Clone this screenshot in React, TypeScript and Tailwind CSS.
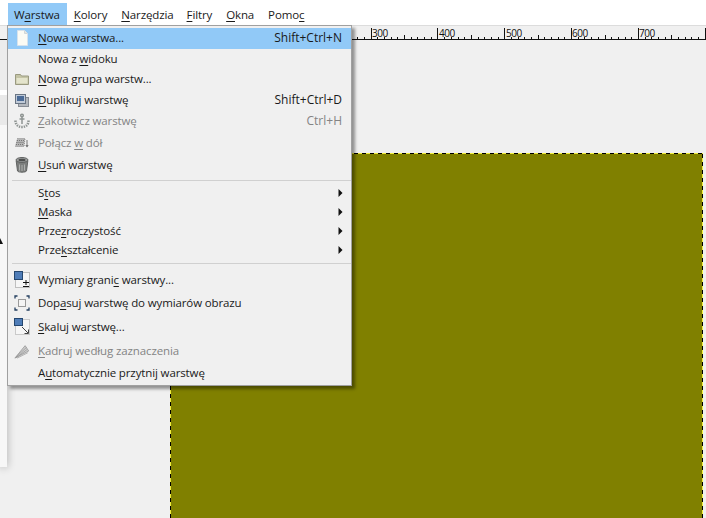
import React from "react";

type Row = { label: React.ReactNode; h: string; icon?: React.ReactNode; shortcut?: string; disabled?: boolean; active?: boolean; arrow?: boolean };

const U = ({ children }: { children: React.ReactNode }) => (
  <span className="underline decoration-1 underline-offset-2">{children}</span>
);

const PageIcon = () => (
  <svg width="16" height="18" viewBox="0 0 16 18">
    <path d="M3.500 1.500h7l3 3v12h-10z" fill="#fbfbf4" stroke="#d6e2ec" />
    <path d="M10.500 1.500v3h3" fill="#e6e6dc" stroke="#cfd6da" />
  </svg>
);
const FolderIcon = () => (
  <svg width="16" height="16" viewBox="0 0 16 16">
    <path d="M1.500 3.500h5l1 1.500h7v8.500h-13z" fill="#c4c4a6" stroke="#9a9a80" />
    <path d="M2.500 7h11v5.500h-11z" fill="#e4e4cc" />
  </svg>
);
const DuplicateIcon = () => (
  <svg width="16" height="16" viewBox="0 0 16 16">
    <rect x="4.500" y="5.500" width="10" height="9" fill="#b4b8be" stroke="#878c94" />
    <rect x="1.500" y="2.500" width="10" height="9" fill="#c0cad8" stroke="#6a7583" />
    <rect x="3" y="4" width="7" height="5" fill="#4a6a96" />
  </svg>
);
const AnchorIcon = () => (
  <svg width="16" height="16" viewBox="0 0 16 16" fill="none" stroke="#8e9492" strokeWidth="1.500">
    <circle cx="8" cy="2.500" r="1.300" />
    <path d="M8 4v7M5.500 6h5" />
    <path d="M1.500 7.500c0 4 2.500 6.500 6.500 6.500s6.500-2.500 6.500-6.500" strokeWidth="2.600" strokeDasharray="1.400 1" />
  </svg>
);
const MergeIcon = () => (
  <svg width="16" height="16" viewBox="0 0 16 16">
    <path d="M3.500 3.500h7.500l-1 8h-8.500z" fill="#b4b4b4" stroke="#8a8a8a" strokeDasharray="1 1" />
    <path d="M3 5.500h7M2.500 7.500h7M2 9.500h7.500" stroke="#777" strokeDasharray="1 1" />
    <path d="M13 5v7" stroke="#777" />
    <path d="M11.300 10l1.700 2.500 1.700-2.500z" fill="#777" />
  </svg>
);
const TrashIcon = () => (
  <svg width="14" height="16" viewBox="0 0 14 16">
    <ellipse cx="7" cy="3" rx="6" ry="2.500" fill="#9a9c9b" stroke="#616362" />
    <ellipse cx="7" cy="3" rx="3.500" ry="1.200" fill="#4d4f4e" />
    <path d="M1.200 4l1.300 10c1 1.600 8 1.600 9 0l1.300-10c-2 2-9.600 2-11.600 0z" fill="#7c7e7d" stroke="#616362" />
    <path d="M4.500 7.500v6M7 8v6M9.500 7.500v6" stroke="#aeb0af" />
  </svg>
);
const BoundaryIcon = () => (
  <svg width="16" height="18" viewBox="0 0 16 18">
    <rect x="1.500" y="1.500" width="14" height="15" fill="#f6f6f6" stroke="#8a8a8a" strokeDasharray="1 1" />
    <rect x="0.500" y="0.500" width="8" height="8" fill="#4f7db8" stroke="#25476f" />
    <path d="M9 11.500h6M12 9v5M9 15.500h6" stroke="#111" fill="none" />
  </svg>
);
const FitIcon = () => (
  <svg width="16" height="16" viewBox="0 0 16 16" fill="none">
    <rect x="4.500" y="4.500" width="7" height="7" fill="#f4f4f4" stroke="#9a9a9a" />
    <path d="M1 3.500V1h2.500M12.500 1H15v2.500M15 12.500V15h-2.500M3.500 15H1v-2.500" stroke="#243f5f" strokeWidth="1.300" />
  </svg>
);
const ScaleIcon = () => (
  <svg width="16" height="18" viewBox="0 0 16 18">
    <rect x="1.500" y="1.500" width="14" height="15" fill="#f6f6f6" stroke="#a0a0a0" strokeDasharray="1 1" />
    <rect x="0.500" y="0.500" width="8" height="7" fill="#4f7db8" stroke="#25476f" />
    <path d="M8 9l6 6M14.500 11.500v4h-4" stroke="#444" fill="none" />
  </svg>
);
const CropIcon = () => (
  <svg width="18" height="18" viewBox="0 0 18 18" fill="none" stroke="#9c9c9c">
    <path d="M1 17L12.500 3l4 6z" fill="#cfcfcf" />
    <path d="M2 16L14 5M2.500 16.500l12-9M3.500 17l12-6" strokeWidth="0.700" stroke="#8c8c8c" />
  </svg>
);
const Arrow = () => (
  <svg width="5" height="8" viewBox="0 0 5 8" className="mr-[-1px]">
    <path d="M0.500 0l4 4-4 4z" fill="#111" />
  </svg>
);

const Item = ({ label, h, icon, shortcut, disabled, active, arrow }: Row) => (
  <div
    className={`flex items-center pb-[1px] pl-[6px] pr-[9px] ${h} ${active ? "bg-[#91c9f7]" : ""} ${disabled ? "text-[#848484]" : "text-[#1a1a1a]"}`}
  >
    <span className="flex w-[16px] justify-center">{icon}</span>
    <span className="ml-[8px] flex-1 whitespace-nowrap">{label}</span>
    {shortcut ? <span className="whitespace-nowrap text-[12px] tracking-normal">{shortcut}</span> : null}
    {arrow ? <Arrow /> : null}
  </div>
);

const labels = [
  { t: "300", x: 372 },
  { t: "400", x: 439 },
  { t: "500", x: 506 },
  { t: "600", x: 572 },
  { t: "700", x: 639 },
];

const Ruler = () => {
  const ticks: React.ReactNode[] = [];
  for (let i = 0; i < 120; i++) {
    const x = Math.round(370.7 - 66.8 * 5 + i * 6.68);
    const major = i % 10 === 0;
    const mid = i % 5 === 0;
    ticks.push(<line key={i} x1={x + 0.5} x2={x + 0.5} y1={major ? 3 : mid ? 10 : 12} y2={15} stroke="#111" />);
  }
  return (
    <div className="relative h-[15px] shrink-0 border-t border-[#dcdcdc] bg-[#f0f0f0]">
      <svg width="706" height="15" className="absolute left-0 top-[-1px]">
        {ticks}
        <line x1="0" x2="706" y1="14.500" y2="14.500" stroke="#111" />
      </svg>
      {labels.map((l) => (
        <span key={l.t} className="absolute top-[1px] text-[10px] leading-[12px] tracking-[-0.5px] text-[#111]" style={{ left: l.x }}>
          {l.t}
        </span>
      ))}
    </div>
  );
};

const antsH = "bg-[repeating-linear-gradient(90deg,#000_0_4px,#f2ee3c_4px_8px)]";
const antsV = "bg-[repeating-linear-gradient(180deg,#000_0_4px,#f2ee3c_4px_8px)]";

export default function App() {
  return (
    <div
      className="relative flex h-[518px] w-[706px] flex-col overflow-hidden bg-[#f0f0f0] text-[11.500px] leading-[16px] tracking-[-0.12px]"
      style={{ fontFamily: '"Open Sans","Noto Sans",sans-serif' }}
    >
      <div className="flex h-[25px] shrink-0 bg-white pl-[8px] pt-[3px] text-[#1a1a1a]">
        <span className="h-[22px] bg-[#91c9f7] pl-[6px] pr-[7px] pt-[4px]">W<U>a</U>rstwa</span>
        <span className="px-[7px] pt-[4px]"><U>K</U>olory</span>
        <span className="pl-[7px] pr-[6px] pt-[4px]"><U>N</U>arzędzia</span>
        <span className="px-[7px] pt-[4px]"><U>F</U>iltry</span>
        <span className="px-[7px] pt-[4px]"><U>O</U>kna</span>
        <span className="px-[7px] pt-[4px]">Pomo<U>c</U></span>
      </div>
      <Ruler />
      <div className="relative min-h-0 flex-1 overflow-hidden">
        {/* left dock behind the menu */}
        <div className="absolute left-0 top-0 flex h-[427px] w-[7px] flex-col bg-[#f7f7f7] shadow-[0_0_8px_rgba(0,0,0,0.3)]">
          <div className="h-[50px] bg-[#ececec]" />
          <div className="h-[5px] bg-white" />
          <div className="h-[30px] bg-[#e9e9e9]" />
          <span className="absolute left-0 top-[198px] h-0 w-0 border-b-[6px] border-r-[3px] border-b-[#111] border-r-transparent" />
        </div>
        <div className="ml-[170px] mt-[113px] flex h-[400px] w-[533px] flex-col">
          <div className={`h-px ${antsH}`} />
          <div className="flex flex-1">
            <div className={`w-px ${antsV}`} />
            <div className="flex-1 bg-[#808000]" />
            <div className={`w-px ${antsV}`} />
          </div>
        </div>
      </div>
      <div className="absolute left-[7px] top-[25px] w-[345px] border border-[#a0a0a0] bg-[#f0f0f0] pb-[1px] pt-[2px] shadow-[3px_3px_3px_rgba(0,0,0,0.4)]">
        <Item h="h-[21px]" active icon={<PageIcon />} shortcut="Shift+Ctrl+N" label={<><U>N</U>owa warstwa...</>} />
        <Item h="h-[20px]" label={<>Nowa z <U>w</U>idoku</>} />
        <Item h="h-[20px]" icon={<FolderIcon />} label={<><U>N</U>owa grupa warstw...</>} />
        <Item h="h-[22px]" icon={<DuplicateIcon />} shortcut="Shift+Ctrl+D" label={<><U>D</U>uplikuj warstwę</>} />
        <Item h="h-[21px]" disabled icon={<AnchorIcon />} shortcut="Ctrl+H" label={<><U>Z</U>akotwicz warstwę</>} />
        <Item h="h-[22px]" disabled icon={<MergeIcon />} label={<>Połącz <U>w</U> dół</>} />
        <Item h="h-[23px]" icon={<TrashIcon />} label={<><U>U</U>suń warstwę</>} />
        <div className="ml-[4px] mb-[3px] mt-[3px] h-px bg-[#d0d0d0]" />
        <Item h="h-[19px]" arrow label={<>S<U>t</U>os</>} />
        <Item h="h-[19px]" arrow label={<><U>M</U>aska</>} />
        <Item h="h-[19px]" arrow label={<>Prze<U>z</U>roczystość</>} />
        <Item h="h-[19px]" arrow label={<>Prze<U>k</U>ształcenie</>} />
        <div className="ml-[4px] mb-[5px] mt-[3px] h-px bg-[#d0d0d0]" />
        <Item h="h-[23px]" icon={<BoundaryIcon />} label={<>Wymiary grani<U>c</U> warstwy...</>} />
        <Item h="h-[23px]" icon={<FitIcon />} label={<>Dop<U>a</U>suj warstwę do wymiarów obrazu</>} />
        <Item h="h-[25px]" icon={<ScaleIcon />} label={<><U>S</U>kaluj warstwę...</>} />
        <Item h="h-[23px]" disabled icon={<CropIcon />} label={<><U>K</U>adruj według zaznaczenia</>} />
        <Item h="h-[21px]" label={<>A<U>u</U>tomatycznie przytnij warstwę</>} />
      </div>
    </div>
  );
}
